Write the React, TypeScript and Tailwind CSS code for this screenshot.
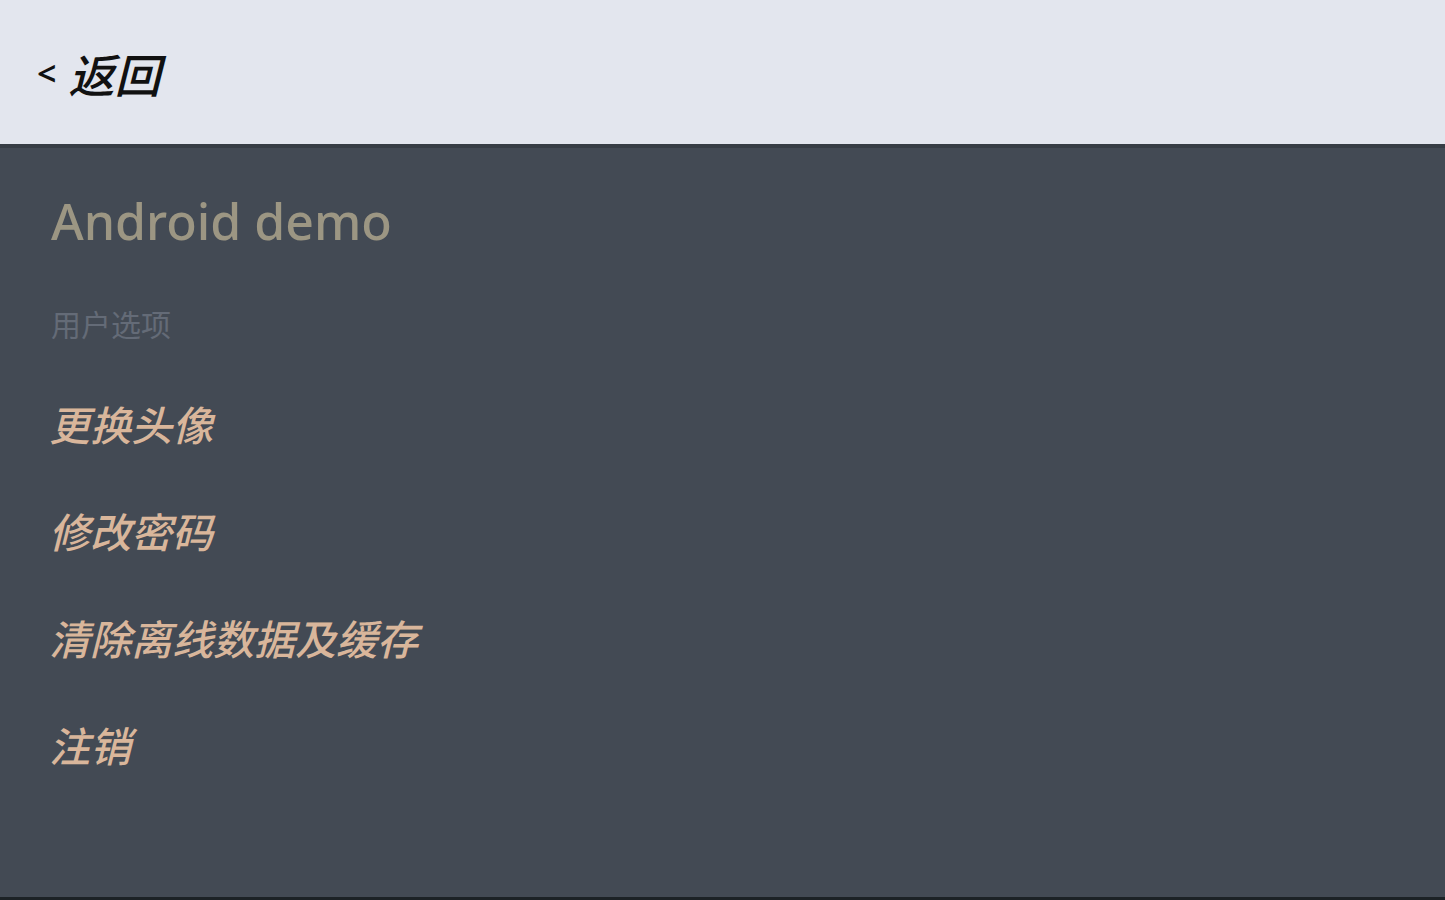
import React from "react";

const items = ["更换头像", "修改密码", "清除离线数据及缓存", "注销"];

export default function App() {
  const cjk = { fontFamily: '"Noto Sans", "Noto Sans CJK SC", sans-serif' };
  return (
    <div className="w-[1445px] h-[900px] flex flex-col bg-[#434a54] overflow-hidden" style={cjk}>
      <header className="h-[148px] shrink-0 bg-[#e3e6ee] border-b-[4px] border-[#373d45] flex items-center pl-[37px] pt-[6px]">
        <span className="text-[34px] leading-none font-semibold text-[#111] mr-[12px] -mt-[4px]">&lt;</span>
        <span className="text-[46px] leading-none italic font-medium text-[#111]">返回</span>
      </header>
      <main className="flex-1 flex flex-col pl-[51px]">
        <div className="mt-[24px] h-[98px] flex items-center text-[50px] leading-none font-medium text-[#9c9683]">
          Android demo
        </div>
        <div className="mt-[40px] h-[30px] text-[30px] leading-[30px] text-[#646b77]">用户选项</div>
        <ul className="mt-[32px] flex flex-col -ml-[2px]">
          {items.map((t) => (
            <li key={t} className="h-[107px] flex items-center text-[41px] leading-none italic font-medium text-[#d9b69b]">
              {t}
            </li>
          ))}
        </ul>
      </main>
      <div className="h-[3px] shrink-0 bg-[#1c2226]" />
    </div>
  );
}
